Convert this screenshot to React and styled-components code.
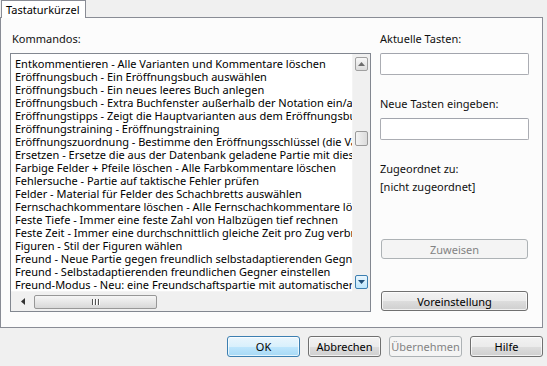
import React from "react";
import styled, { createGlobalStyle } from "styled-components";

const GlobalStyle = createGlobalStyle`
  html, body {
    margin: 0;
    padding: 0;
    background: #f0f0f0;
  }
  body {
    font-family: "Noto Sans", "DejaVu Sans", sans-serif;
    font-size: 11px;
    color: #000;
  }
`;

const Dialog = styled.div`
  width: 547px;
  height: 366px;
  overflow: hidden;
`;

const TabStrip = styled.div`
  display: flex;
  height: 18px;
  padding-left: 1px;
`;

const Tab = styled.div`
  height: 18px;
  padding: 0 5px 0 4px;
  background: #fff;
  border: 1px solid #898c95;
  border-bottom: none;
  box-sizing: border-box;
  line-height: 17px;
  position: relative;
  z-index: 1;
`;

const TabPanel = styled.div`
  width: 543px;
  height: 311px;
  box-sizing: border-box;
  margin-top: -1px;
  border: 1px solid #898c95;
  background: #fcfcfc;
  display: grid;
  grid-template-columns: 361px 149px;
  column-gap: 9px;
  padding: 13px 0 0 9px;
`;

const Column = styled.div`
  display: flex;
  flex-direction: column;
`;

const Label = styled.div`
  height: 16px;
  line-height: 16px;
  margin-left: ${(p) => p.$indent || 0}px;
  margin-bottom: ${(p) => p.$gap || 0}px;
  color: #111;
  white-space: nowrap;
`;

const ListBox = styled.div`
  width: 361px;
  height: 259px;
  box-sizing: border-box;
  border: 1px solid #828790;
  background: #fff;
  display: grid;
  grid-template-columns: 341px 18px;
  grid-template-rows: 237px 20px;
`;

const Rows = styled.div`
  overflow: hidden;
  padding: 3px 0 0 4px;
`;

const Row = styled.div`
  height: 13px;
  line-height: 13px;
  white-space: nowrap;
`;

const VScroll = styled.div`
  background: #f0f0f0;
  border-left: 1px solid #f4f4f4;
  display: flex;
  flex-direction: column;
  align-items: center;
  padding: 3px 0 2px;
`;

const ArrowButton = styled.div`
  width: 13px;
  height: 14px;
  box-sizing: border-box;
  border: 1px solid ${(p) => (p.$hot ? "#3c7fb1" : "#a0a0a0")};
  border-radius: 2px;
  background: ${(p) =>
    p.$hot
      ? "linear-gradient(#eaf6fd, #bee6fd)"
      : "linear-gradient(#f8f8f8, #dcdcdc)"};
  display: flex;
  align-items: center;
  justify-content: center;
`;

const ThumbV = styled.div`
  width: 13px;
  height: 15px;
  box-sizing: border-box;
  border: 1px solid #999;
  border-radius: 2px;
  background: linear-gradient(90deg, #f3f3f3, #dcdcdc);
  margin: ${(p) => p.$offset}px 0 auto;
`;

const HScroll = styled.div`
  background: #f0f0f0;
  border-top: 1px solid #f4f4f4;
  display: flex;
  align-items: center;
  padding-left: 5px;
`;

const SmallArrow = styled.div`
  width: 14px;
  height: 14px;
  display: flex;
  align-items: center;
  justify-content: center;
`;

const ThumbH = styled.div`
  width: 123px;
  height: 14px;
  box-sizing: border-box;
  margin-left: 4px;
  border: 1px solid #979797;
  border-radius: 2px;
  background: linear-gradient(#f6f6f6, #d8d8d8);
  display: flex;
  align-items: center;
  justify-content: center;
  gap: 1px;
`;

const Grip = styled.span`
  width: 1px;
  height: 6px;
  background: #555;
  box-shadow: 1px 0 0 #fff;
  margin-right: 1px;
`;

const Corner = styled.div`
  background: #f0f0f0;
`;

const TextBox = styled.div`
  width: 149px;
  height: 22px;
  box-sizing: border-box;
  border: 1px solid #abadb3;
  border-top-color: #a2a5ad;
  border-radius: 2px;
  background: #fff;
  margin-bottom: ${(p) => p.$gap || 0}px;
`;

const Button = styled.button`
  font-family: inherit;
  font-size: 11px;
  height: ${(p) => p.$h || 21}px;
  width: ${(p) => p.$w}px;
  box-sizing: border-box;
  border-radius: 3px;
  padding: 0;
  margin-left: ${(p) => p.$ml || 0}px;
  margin-top: ${(p) => p.$mt || 0}px;
  border: 1px solid ${(p) => (p.$focus ? "#3c7fb1" : p.$disabled ? "#adb2b5" : "#707070")};
  color: ${(p) => (p.$disabled ? "#838383" : "#000")};
  background: ${(p) =>
    p.$disabled
      ? "#f4f4f4"
      : p.$focus
      ? "linear-gradient(#eaf6fd 0%, #d9f0fc 50%, #bee6fd 51%, #a7d9f5 100%)"
      : "linear-gradient(#f2f2f2 0%, #ebebeb 50%, #dddddd 51%, #cfcfcf 100%)"};
  box-shadow: inset 0 0 0 1px ${(p) => (p.$disabled ? "transparent" : "rgba(255,255,255,0.7)")};
`;

const Footer = styled.div`
  display: flex;
  padding: 8px 0 0 227px;
  gap: 8px;
`;

const commands = [
  "Entkommentieren - Alle Varianten und Kommentare löschen",
  "Eröffnungsbuch - Ein Eröffnungsbuch auswählen",
  "Eröffnungsbuch - Ein neues leeres Buch anlegen",
  "Eröffnungsbuch - Extra Buchfenster außerhalb der Notation ein/aus",
  "Eröffnungstipps - Zeigt die Hauptvarianten aus dem Eröffnungsbuch",
  "Eröffnungstraining - Eröffnungstraining",
  "Eröffnungszuordnung - Bestimme den Eröffnungsschlüssel (die Variante)",
  "Ersetzen - Ersetze die aus der Datenbank geladene Partie mit dieser",
  "Farbige Felder + Pfeile löschen - Alle Farbkommentare löschen",
  "Fehlersuche - Partie auf taktische Fehler prüfen",
  "Felder - Material für Felder des Schachbretts auswählen",
  "Fernschachkommentare löschen - Alle Fernschachkommentare löschen",
  "Feste Tiefe - Immer eine feste Zahl von Halbzügen tief rechnen",
  "Feste Zeit - Immer eine durchschnittlich gleiche Zeit pro Zug verbrauchen",
  "Figuren - Stil der Figuren wählen",
  "Freund - Neue Partie gegen freundlich selbstadaptierenden Gegner",
  "Freund - Selbstadaptierenden freundlichen Gegner einstellen",
  "Freund-Modus - Neu: eine Freundschaftspartie mit automatischer Anpassung",
];

const Tri = ({ dir, color = "#4d4d4d" }) => {
  const pts = {
    up: "0,4 3.5,0 7,4",
    down: "0,0 3.5,4 7,0",
    left: "4,0 0,3.5 4,7",
  }[dir];
  const w = dir === "left" ? 4 : 7;
  const h = dir === "left" ? 7 : 4;
  return (
    <svg width={w} height={h} viewBox={`0 0 ${w} ${h}`} style={{ display: "block" }}>
      <polygon points={pts} fill={color} />
    </svg>
  );
};

export default function App() {
  return (
    <Dialog>
      <GlobalStyle />
      <TabStrip>
        <Tab>Tastaturkürzel</Tab>
      </TabStrip>
      <TabPanel>
        <Column>
          <Label $indent={2} $gap={6}>Kommandos:</Label>
          <ListBox>
            <Rows>
              {commands.map((c) => (
                <Row key={c}>{c}</Row>
              ))}
            </Rows>
            <VScroll>
              <ArrowButton>
                <Tri dir="up" color="#6d6d6d" />
              </ArrowButton>
              <ThumbV $offset={60} />
              <ArrowButton $hot>
                <Tri dir="down" color="#1f4f7a" />
              </ArrowButton>
            </VScroll>
            <HScroll>
              <SmallArrow>
                <Tri dir="left" color="#333" />
              </SmallArrow>
              <ThumbH>
                <Grip />
                <Grip />
                <Grip />
              </ThumbH>
            </HScroll>
            <Corner />
          </ListBox>
        </Column>
        <Column>
          <Label $gap={6}>Aktuelle Tasten:</Label>
          <TextBox $gap={21} />
          <Label $gap={6}>Neue Tasten eingeben:</Label>
          <TextBox $gap={21} />
          <Label $gap={2}>Zugeordnet zu:</Label>
          <Label>[nicht zugeordnet]</Label>
          <Button $disabled $w={147} $h={20} $ml={1} $mt={44}>
            Zuweisen
          </Button>
          <Button $w={147} $h={20} $ml={1} $mt={32}>
            Voreinstellung
          </Button>
        </Column>
      </TabPanel>
      <Footer>
        <Button $focus $w={73}>OK</Button>
        <Button $w={73}>Abbrechen</Button>
        <Button $disabled $w={73}>Übernehmen</Button>
        <Button $w={73}>Hilfe</Button>
      </Footer>
    </Dialog>
  );
}
